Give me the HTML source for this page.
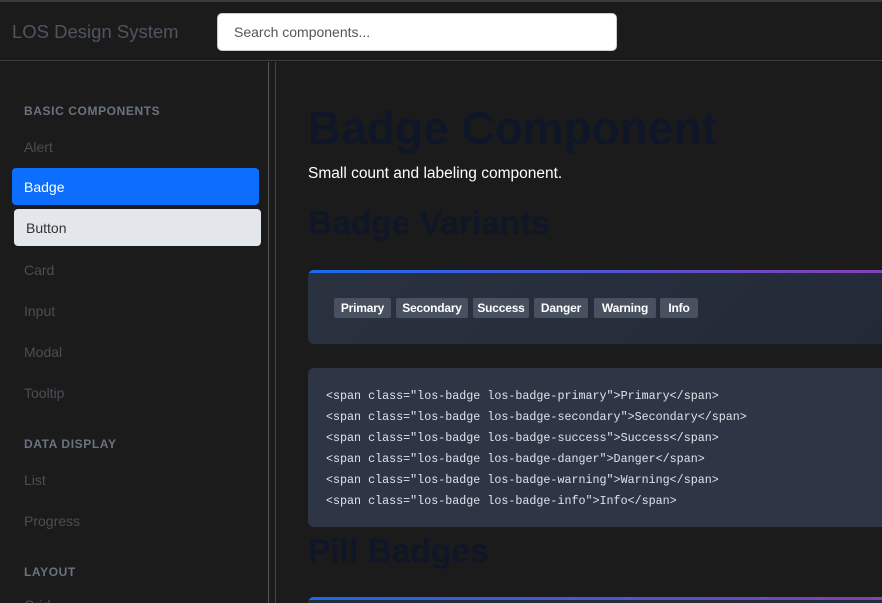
<!DOCTYPE html>
<html style="overflow:hidden;height:603px"><head><style>
*{margin:0;padding:0;box-sizing:border-box}
body{width:882px;height:603px;overflow:hidden;background:#1b1b1b;font-family:"Liberation Sans","DejaVu Sans",sans-serif;position:relative}
.top{position:absolute;left:0;top:0;width:882px;height:61px;border-top:2px solid #3a3a3a;border-bottom:1px solid #3c3c3c;background:#1b1b1b}
.logo{position:absolute;left:12px;top:19px;font-size:18.5px;color:#4e5560}
.search{position:absolute;left:217px;top:11px;width:400px;height:38px;background:#fff;border:1px solid #ccc;border-radius:5px;font-size:14px;color:#555;padding:10px 16px}
.h{position:absolute;left:24px;font-size:12px;font-weight:bold;letter-spacing:.6px;color:#6b7380}
.i{position:absolute;left:24px;font-size:14px;color:#4a4e55}
.act{position:absolute;left:12px;top:168px;width:247px;height:37px;background:#0d6efd;border-radius:4px;color:#fff;font-size:14px;padding:11px 12px}
.btn{position:absolute;left:14px;top:209px;width:247px;height:37px;background:#e3e6ea;border-radius:4px;color:#333;font-size:14px;padding:11px 12px}
.l1{position:absolute;left:268px;top:62px;width:1px;height:541px;background:#555}
.l2{position:absolute;left:275px;top:62px;width:1px;height:541px;background:#444}
.t1{position:absolute;left:308px;top:101px;font-size:46px;font-weight:bold;color:#0e1628}
.sub{position:absolute;left:308px;top:165px;font-size:15.5px;color:#fff}
.t2{position:absolute;left:308px;top:205px;font-size:33.5px;font-weight:bold;color:#0e1628}
.card{position:absolute;left:308px;top:270px;width:600px;height:74px;border-radius:6px;background:linear-gradient(135deg,#2a3240,#222a37);overflow:hidden}
.card:before{content:"";position:absolute;left:0;top:0;right:0;height:3px;background:linear-gradient(90deg,#1a6bf0,#8a3fb0)}
.bd{position:absolute;display:block;top:28px;height:20px;background:#495160;color:#fff;font-size:12px;font-weight:bold;line-height:20px;text-align:center;border-radius:2px;letter-spacing:-.2px}
.code{position:absolute;left:308px;top:368px;width:600px;height:159px;border-radius:6px;background:#2e3646;padding:18px 18px;font-family:"Liberation Mono","DejaVu Sans Mono",monospace;font-size:11.7px;line-height:21px;color:#dfe3ea;white-space:pre}
.t3{position:absolute;left:308px;top:533px;font-size:33.5px;font-weight:bold;color:#0e1628}
.card2{position:absolute;left:308px;top:597px;width:600px;height:6px;border-radius:6px 6px 0 0;background:#262d3a;overflow:hidden}
.card2:before{content:"";position:absolute;left:0;top:0;right:0;height:3px;background:linear-gradient(90deg,#1a6bf0,#8a3fb0)}
</style></head><body>
<div class="top"><div class="logo">LOS Design System</div><div class="search">Search components...</div></div>
<div class="h" style="top:104px">BASIC COMPONENTS</div>
<div class="i" style="top:139px">Alert</div>
<div class="act">Badge</div>
<div class="btn">Button</div>
<div class="i" style="top:262px">Card</div>
<div class="i" style="top:303px">Input</div>
<div class="i" style="top:344px">Modal</div>
<div class="i" style="top:385px">Tooltip</div>
<div class="h" style="top:437px">DATA DISPLAY</div>
<div class="i" style="top:472px">List</div>
<div class="i" style="top:513px">Progress</div>
<div class="h" style="top:565px">LAYOUT</div>
<div class="i" style="top:597px">Grid</div>
<div class="l1"></div><div class="l2"></div>
<div class="t1">Badge Component</div>
<div class="sub">Small count and labeling component.</div>
<div class="t2">Badge Variants</div>
<div class="card">
<span class="bd" style="left:26px;width:57px">Primary</span>
<span class="bd" style="left:88px;width:72px">Secondary</span>
<span class="bd" style="left:165px;width:56px">Success</span>
<span class="bd" style="left:226px;width:54px">Danger</span>
<span class="bd" style="left:286px;width:62px">Warning</span>
<span class="bd" style="left:352px;width:38px">Info</span>
</div>
<div class="code">&lt;span class="los-badge los-badge-primary"&gt;Primary&lt;/span&gt;
&lt;span class="los-badge los-badge-secondary"&gt;Secondary&lt;/span&gt;
&lt;span class="los-badge los-badge-success"&gt;Success&lt;/span&gt;
&lt;span class="los-badge los-badge-danger"&gt;Danger&lt;/span&gt;
&lt;span class="los-badge los-badge-warning"&gt;Warning&lt;/span&gt;
&lt;span class="los-badge los-badge-info"&gt;Info&lt;/span&gt;</div>
<div class="t3">Pill Badges</div>
<div class="card2"></div>
</body></html>
